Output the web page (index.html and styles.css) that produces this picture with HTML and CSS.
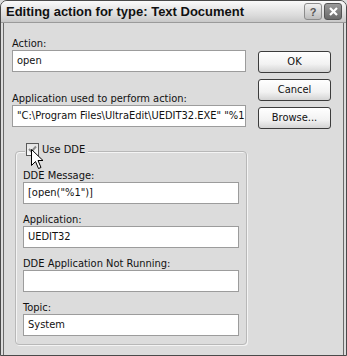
FILE: index.html
```html
<!DOCTYPE html>
<html lang="en">
<head>
    <meta charset="UTF-8">
    <title>Editing action for type: Text Document</title>
    <link rel="stylesheet" href="styles.css">
</head>
<body>
    <div class="window">
        <!-- Title bar -->
        <div class="titlebar">
            <span class="title">Editing action for type: Text Document</span>
            <div class="title-buttons">
                <span class="tb-btn help">?</span>
                <span class="tb-btn close">
                    <svg width="11" height="11" viewBox="0 0 11 11"><path d="M2 2 L9 9 M9 2 L2 9" stroke="#fff" stroke-width="2.2"/></svg>
                </span>
            </div>
        </div>

        <!-- Dialog body -->
        <div class="client">
            <div class="main">
                <div class="fields">
                    <label class="lbl">Action:</label>
                    <div class="input">open</div>

                    <label class="lbl lbl-gap">Application used to perform action:</label>
                    <div class="input">"C:\Program Files\UltraEdit\UEDIT32.EXE" "%1</div>
                </div>
                <div class="buttons">
                    <div class="btn">OK</div>
                    <div class="btn">Cancel</div>
                    <div class="btn">Browse...</div>
                </div>
            </div>

            <!-- DDE group -->
            <div class="group">
                <div class="legend">
                    <span class="checkbox">
                        <svg width="9" height="9" viewBox="0 0 9 9"><path d="M1 4 L3.5 6.5 L8 1.5" stroke="#8a8a8a" stroke-width="2" fill="none"/></svg>
                    </span>
                    <span>Use DDE</span>
                </div>
                <label class="lbl">DDE Message:</label>
                <div class="input">[open("%1")]</div>
                <label class="lbl lbl-small">Application:</label>
                <div class="input">UEDIT32</div>
                <label class="lbl lbl-small">DDE Application Not Running:</label>
                <div class="input"></div>
                <label class="lbl lbl-small">Topic:</label>
                <div class="input">System</div>
            </div>
        </div>

        <!-- Mouse pointer over the checkbox -->
        <svg class="cursor" width="13" height="21" viewBox="0 0 13 21">
            <path d="M0.5 0.5 L0.5 16.5 L4.5 12.5 L7.5 19.5 L10 18.5 L7 11.5 L12 11.5 Z" fill="#fff" stroke="#000" stroke-width="1"/>
        </svg>
    </div>
</body>
</html>
```

FILE: styles.css
```css
body {
    margin: 0;
    background: #dcdcdc;
    font-family: "DejaVu Sans Condensed", "DejaVu Sans", sans-serif;
    font-size: 11px;
    color: #111;
}

.window {
    position: relative;
    width: 345px;
    height: 354px;
    border: 1px solid #4a4a4a;
    border-radius: 7px 7px 0 0;
    background: #dcdcdc;
    overflow: hidden;
}

.titlebar {
    height: 21px;
    display: flex;
    align-items: center;
    justify-content: space-between;
    padding: 0 4px 0 5px;
    background: linear-gradient(to bottom, #fafafa 0%, #ececec 30%, #dadada 70%, #c8c8c8 100%);
    border-bottom: 1px solid #9a9a9a;
}

.title {
    font-family: "Liberation Sans", sans-serif;
    font-weight: bold;
    font-size: 13px;
    color: #111;
}

.title-buttons {
    display: flex;
    gap: 2px;
}

.tb-btn {
    width: 16px;
    height: 15px;
    border: 1px solid #8c8c8c;
    border-radius: 3px;
    display: flex;
    align-items: center;
    justify-content: center;
    font-family: "Liberation Sans", sans-serif;
    font-weight: bold;
    font-size: 11px;
}

.help {
    background: linear-gradient(to bottom, #f0f0f0, #bdbdbd);
    color: #555;
}

.close {
    background: linear-gradient(to bottom, #9a9a9a, #6a6a6a);
    border-color: #555;
}

.client {
    height: 328px;
    margin: 0 2px 2px;
    border: 1px solid #6a6a6a;
    border-top: none;
    padding: 14px 0 0 8px;
}

.main {
    display: flex;
    gap: 12px;
}

.fields {
    width: 234px;
}

.lbl {
    display: block;
    height: 13px;
    line-height: 13px;
    margin-bottom: 0;
}

.lbl-gap {
    margin-top: 20px;
}

.lbl-small {
    margin-top: 9px;
}

.input {
    height: 20px;
    line-height: 20px;
    background: #fff;
    border: 1px solid #9c9c9c;
    padding: 0 4px;
    white-space: nowrap;
    overflow: hidden;
}

.buttons {
    display: flex;
    flex-direction: column;
    gap: 6px;
    padding-top: 14px;
}

.btn {
    width: 71px;
    height: 20px;
    line-height: 20px;
    text-align: center;
    border: 1px solid #3c3c3c;
    border-radius: 3px;
    background: linear-gradient(to bottom, #ffffff 0%, #f2f2f2 60%, #d4d4d4 100%);
}

.group {
    position: relative;
    width: 216px;
    margin: 22px 0 0 3px;
    padding: 17px 7px 8px 7px;
    border: 1px solid #b8b8b8;
    border-radius: 4px;
    box-shadow: inset 1px 1px 0 #f4f4f4, 1px 1px 0 #f4f4f4;
}

.legend {
    position: absolute;
    top: -9px;
    left: 9px;
    display: flex;
    align-items: center;
    gap: 3px;
    padding: 0 3px 0 1px;
    background: #dcdcdc;
}

.checkbox {
    width: 11px;
    height: 11px;
    border: 1px solid #5a5a5a;
    background: linear-gradient(to bottom, #e4e4e4, #fafafa);
    display: flex;
    align-items: center;
    justify-content: center;
}

.cursor {
    position: absolute;
    left: 30px;
    top: 148px;
}
```
